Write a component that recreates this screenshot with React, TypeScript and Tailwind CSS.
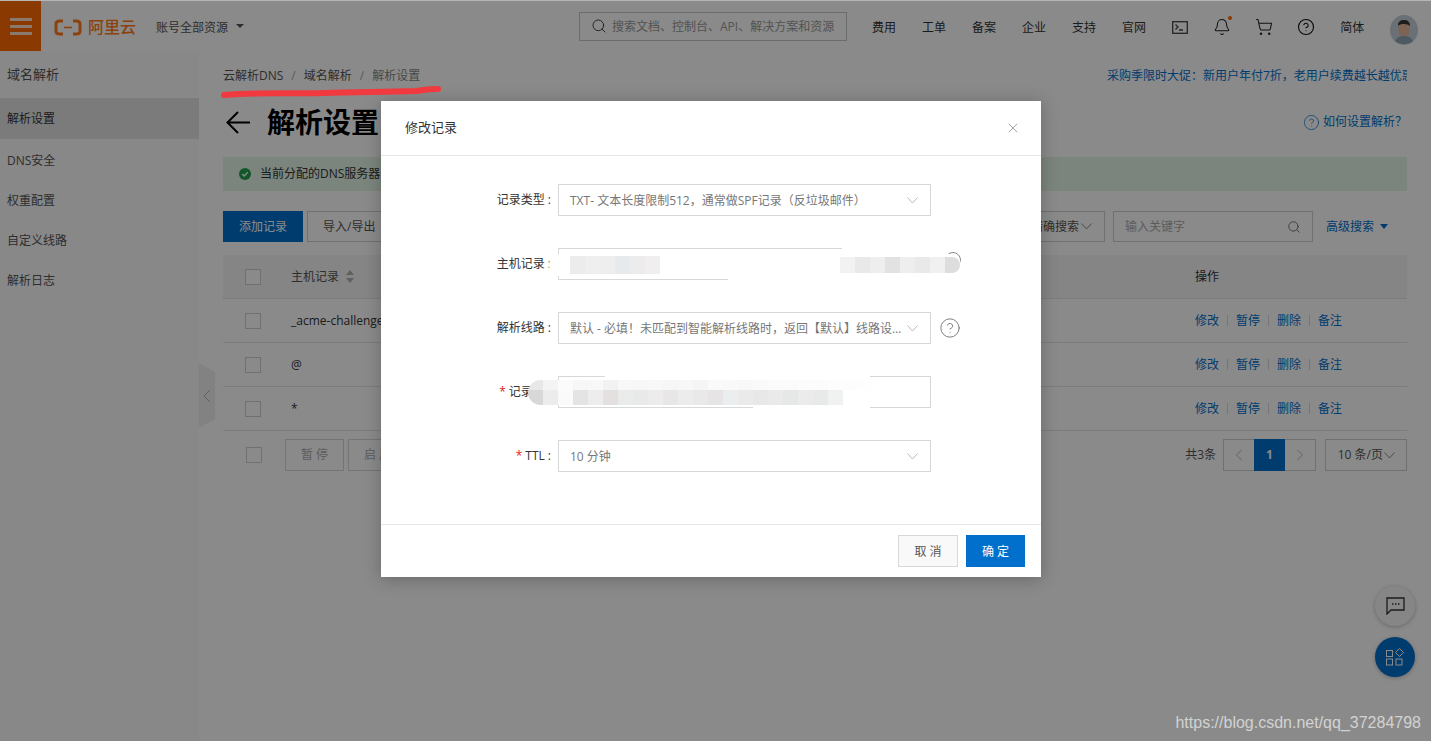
import { Bell, ChevronLeft, ChevronRight, CircleHelp, Search, ShoppingCart, X } from "lucide-react"

const navItems = ["费用", "工单", "备案", "企业", "支持", "官网"]
const sideItems = ["解析设置", "DNS安全", "权重配置", "自定义线路", "解析日志"]
const records = ["_acme-challenge", "@", "*"]
const actions = ["修改", "暂停", "删除", "备注"]

const mosaicHostLeft = ["#ececec", "#efefef", "#eeeeee", "#e6eaec", "#ececec", "#f0eeee"]
const mosaicHostRight = ["#f2f2f2", "#e9e9e9", "#eeeeee", "#e2e2e2", "#eeeeee", "#e9e9e9", "#f0f0f0", "#dddddd"]
const mosaicValueTop = ["#e8e8e8", "#f4f4f4", "#fbfbfb", "#f7f7f7", "#f8f8f8", "#f2f2f2", "#f8f8f8", "#f7f7f7", "#f8f8f8", "#f6f6f6", "#f7f7f7", "#f5f5f5", "#fafafa", "#f9f9f9", "#f8f8f8", "#fafafa", "#fbfbfb", "#fbfbfb", "#fcfcfc", "#fcfcfc", "#fdfdfd", "#fdfdfd", "#fefefe"]
const mosaicValueBottom = ["#d8d8d8", "#ececec", "#fafafa", "#e4e4e4", "#ededed", "#e4e0e0", "#eaecec", "#e9e9e9", "#ececec", "#e8e6e6", "#ececec", "#e9e9e9", "#e6e4e4", "#eaeeee", "#eaeaea", "#e8e8e8", "#eaeaea", "#e6e8e8", "#ebebeb", "#e8e9e9", "#eff2f0"]

function Mosaic({ colors, cell, height }: { colors: string[]; cell: number; height: number }) {
  return (
    <div className="flex">
      {colors.map((c, i) => (
        <div key={i} style={{ background: c, width: cell, height }} />
      ))}
    </div>
  )
}

function Caret({ color }: { color: string }) {
  return (
    <svg className="shrink-0" width="11" height="7" viewBox="0 0 11 7" fill="none" stroke={color} strokeWidth="1">
      <path d="M0.500 0.500l5 5.500 5-5.500" />
    </svg>
  )
}

function Logo() {
  return (
    <div className="flex items-center gap-[6px] text-[#ff7a1a]">
      <svg width="28" height="17" viewBox="0 0 28 17" fill="none" stroke="currentColor">
        <path d="M9 2H5.500C3.500 2 2 3.200 2 5v7c0 1.800 1.500 3 3.500 3H9" strokeWidth="3" />
        <path d="M19 2h3.500C24.500 2 26 3.200 26 5v7c0 1.800-1.500 3-3.500 3H19" strokeWidth="3" />
        <path d="M10 8.500h8" strokeWidth="1.600" />
      </svg>
      <span className="text-[16px] font-medium leading-none">阿里云</span>
    </div>
  )
}

function Header() {
  return (
    <header className="flex h-[50px] items-center bg-white shadow-[0_1px_3px_rgba(0,0,0,0.1)]">
      <div className="flex h-full w-[41px] flex-col items-center justify-center gap-[4px] bg-[#ff6a00]">
        <div className="h-[3px] w-[22px] bg-white/80" />
        <div className="h-[3px] w-[22px] bg-white/80" />
        <div className="h-[3px] w-[22px] bg-white/80" />
      </div>
      <div className="ml-[13px] mt-[2px]">
        <Logo />
      </div>
      <div className="ml-[20px] mt-[3px] text-[12px] text-[#555]">账号全部资源</div>
      <div className="ml-[8px] h-0 w-0 border-x-[4px] border-t-[4px] border-x-transparent border-t-[#555]" />
      <div className="ml-[335px] flex h-[29px] w-[268px] items-center border border-[#c8c8c8] px-[11px] text-[12px] text-[#999]">
        <Search size={16} strokeWidth={1.500} className="text-[#444]" />
        <span className="ml-[5px] mt-px whitespace-nowrap">搜索文档、控制台、API、解决方案和资源</span>
      </div>
      <nav className="ml-[25px] mt-[3px] flex gap-[26px] text-[12px] text-[#333]">
        {navItems.map((item) => (
          <span key={item} className="whitespace-nowrap">{item}</span>
        ))}
      </nav>
      <svg className="ml-[26px] mt-[2px]" width="16" height="13" viewBox="0 0 16 13" fill="none" stroke="#444" strokeWidth="1.300">
        <rect x="0.700" y="0.700" width="14.600" height="11.600" />
        <path d="M3.500 3.500l2.500 2.500-2.500 2.500M7 9h4" />
      </svg>
      <div className="relative ml-[25px] mt-px">
        <Bell size={18} strokeWidth={1.400} className="text-[#222]" />
        <div className="absolute -right-px -top-[2px] h-[4px] w-[4px] rounded-full bg-[#ff6a00]" />
      </div>
      <ShoppingCart size={18} strokeWidth={1.400} className="ml-[24px] mt-px text-[#222]" />
      <CircleHelp size={18} strokeWidth={1.500} className="ml-[24px] mt-px text-[#111]" />
      <span className="ml-[25px] mt-[3px] text-[12px] text-[#333]">简体</span>
      <svg className="ml-[26px] mt-[8px]" width="28" height="30" viewBox="0 0 28 30">
        <ellipse cx="14" cy="15" rx="14" ry="15" fill="#c3d0da" />
        <ellipse cx="14" cy="14" rx="6" ry="8" fill="#e5b79c" />
        <path d="M8 11c0-5 3-6 6-6s6 1 6 6c-2-2-9-3-12 0z" fill="#3a3431" />
        <path d="M5 26c2-4 5-5 9-5s7 1 9 5c-2 2-5 3-9 3s-7-1-9-3z" fill="#8fa6b5" />
      </svg>
    </header>
  )
}

function Sidebar() {
  return (
    <aside className="w-[199px] shrink-0 bg-[#fbfbfb] text-[12px] text-[#555]">
      <div className="flex h-[47px] items-center pl-[7px] text-[13px] leading-none">域名解析</div>
      {sideItems.map((item, i) => (
        <div
          key={item}
          className={i === 0 ? "mb-px flex h-[41px] items-center bg-[#e3e3e3] pl-[7px] pt-px text-[#333]" : "flex h-[40px] items-center pl-[7px] pt-px"}
        >
          {item}
        </div>
      ))}
    </aside>
  )
}

function Checkbox() {
  return <div className="h-[16px] w-[16px] border border-[#d0d0d0] bg-white" />
}

function Toolbar() {
  return (
    <div className="mt-[20px] flex h-[31px] items-center text-[12px]">
      <div className="flex h-full w-[80px] items-center justify-center bg-[#0070cc] text-white">添加记录</div>
      <div className="ml-[4px] flex h-full w-[90px] items-center border border-[#d0d0d0] pl-[15px] text-[#555]">导入/导出</div>
      <div className="ml-auto flex h-full w-[80px] items-center justify-end gap-[2px] border border-[#d0d0d0] pr-[12px] text-[#555]">
        <span>精确搜索</span>
        <Caret color="#888" />
      </div>
      <div className="ml-[8px] flex h-full w-[200px] items-center justify-between border border-[#d0d0d0] px-[11px] text-[#aaa]">
        <span>输入关键字</span>
        <Search size={14} strokeWidth={1.500} className="text-[#666]" />
      </div>
      <div className="ml-[13px] flex items-center text-[#0070cc]">
        <span>高级搜索</span>
        <div className="ml-[6px] h-0 w-0 border-x-[4px] border-t-[5px] border-x-transparent border-t-[#0070cc]" />
      </div>
      <div className="w-[19px]" />
    </div>
  )
}

function RecordTable() {
  return (
    <div className="mt-[13px] text-[12px]">
      <div className="flex h-[44px] items-center border-b border-[#e3e6ea] bg-[#f5f5f6] pl-[22px] text-[#555]">
        <Checkbox />
        <span className="ml-[30px]">主机记录</span>
        <svg className="ml-[7px]" width="8" height="13" viewBox="0 0 8 13" fill="#b0b0b0">
          <path d="M4 0l4 5H0zM4 13L0 8h8z" />
        </svg>
        <span className="ml-auto w-[212px] text-[#333]">操作</span>
      </div>
      {records.map((r) => (
        <div key={r} className="flex h-[44px] items-center border-b border-[#e3e6ea] pl-[22px] text-[#333]">
          <Checkbox />
          <span className="ml-[30px]">{r}</span>
          <div className="ml-auto flex w-[212px] items-center text-[#0070cc]">
            {actions.map((a, i) => (
              <div key={a} className="flex items-center">
                {i > 0 && <div className="mx-[8px] h-[11px] w-px bg-[#d8d8d8]" />}
                <span>{a}</span>
              </div>
            ))}
          </div>
        </div>
      ))}
    </div>
  )
}

function Footer() {
  return (
    <div className="mt-[8px] flex h-[32px] items-center pl-[23px] text-[12px]">
      <Checkbox />
      <div className="ml-[23px] flex h-full w-[59px] items-center justify-center border border-[#d8d8d8] text-[#aaa]">暂 停</div>
      <div className="ml-[4px] flex h-full w-[59px] items-center justify-center border border-[#d8d8d8] text-[#aaa]">启 用</div>
      <span className="ml-auto text-[#555]">共3条</span>
      <div className="ml-[7px] flex h-full w-[93px] items-center border border-[#d0d0d0]">
        <div className="flex w-[30px] justify-center text-[#aaa]"><ChevronLeft size={20} strokeWidth={1} /></div>
        <div className="flex h-[32px] w-[32px] items-center justify-center bg-[#0070cc] font-bold text-white">1</div>
        <div className="flex w-[30px] justify-center text-[#aaa]"><ChevronRight size={20} strokeWidth={1} /></div>
      </div>
      <div className="ml-[9px] flex h-full w-[82px] items-center justify-end gap-px border border-[#d0d0d0] pr-[11px] text-[#555]">
        <span className="whitespace-nowrap">10 条/页</span>
        <Caret color="#888" />
      </div>
    </div>
  )
}

function Main() {
  return (
    <main className="relative min-w-0 flex-1 bg-white pl-[24px] pr-[24px]">
      <div className="mt-[16px] flex h-[18px] items-center text-[12px] text-[#555]">
        <span>云解析DNS</span>
        <span className="mx-[8px] text-[#aaa]">/</span>
        <span>域名解析</span>
        <span className="mx-[8px] text-[#aaa]">/</span>
        <span className="text-[#888]">解析设置</span>
        <div className="ml-auto w-[300px] overflow-hidden whitespace-nowrap text-[#0070cc]">采购季限时大促：新用户年付7折，老用户续费越长越优惠</div>
      </div>
      <div className="mt-[19px] flex h-[36px] items-center">
        <svg className="ml-[3px]" width="24" height="23" viewBox="0 0 24 23" fill="none" stroke="black" strokeWidth="2">
          <path d="M12 1L1.500 11.500 12 22M1.500 11.500H24" />
        </svg>
        <span className="ml-[17px] text-[28px] font-bold leading-none text-black">解析设置</span>
        <div className="ml-auto flex items-center text-[12px] text-[#0070cc]">
          <CircleHelp size={17} strokeWidth={1} />
          <span className="ml-[3px]">如何设置解析？</span>
        </div>
      </div>
      <div className="mt-[17px] flex h-[34px] items-center bg-[#e3f5e8] pl-[16px] text-[12px] text-[#333]">
        <svg width="12" height="12" viewBox="0 0 12 12">
          <circle cx="6" cy="6" r="6" fill="#22a04c" />
          <path d="M3.200 6l2 2 3.500-3.800" fill="none" stroke="white" strokeWidth="1.300" />
        </svg>
        <span className="ml-[9px]">当前分配的DNS服务器</span>
      </div>
      <Toolbar />
      <RecordTable />
      <Footer />
      <svg className="absolute left-0 top-[312px]" width="17" height="66" viewBox="0 0 17 66">
        <path d="M0 0l16 9v47L0 65z" fill="#f0f0f0" />
        <path d="M11 27l-6 6 6 6" fill="none" stroke="#b4b4b4" strokeWidth="1" />
      </svg>
    </main>
  )
}

function FormRow({ label, required, children }: { label: string; required?: boolean; children: React.ReactNode }) {
  return (
    <div className="relative flex h-[32px] items-center">
      <div className="flex w-[170px] items-center justify-end text-[12px] text-[#333]">
        {required && <span className="mr-[3px] text-[#e02020]">*</span>}
        <span>{label}</span>
        <span className="ml-[3px]">:</span>
      </div>
      <div className="ml-[7px]">{children}</div>
    </div>
  )
}

function SelectBox({ text }: { text: string }) {
  return (
    <div className="flex h-[32px] w-[373px] items-center justify-between border border-[#d7d8d9] pl-[11px] pr-[12px] text-[12px] text-[#777]">
      <span className="truncate pt-px">{text}</span>
      <div className="ml-[4px]">
        <Caret color="#bbb" />
      </div>
    </div>
  )
}

function EditDialog() {
  return (
    <div className="absolute left-[381px] top-[101px] flex h-[476px] w-[660px] flex-col bg-white shadow-[0_2px_16px_rgba(0,0,0,0.25)]">
      <div className="flex h-[55px] shrink-0 items-center justify-between border-b border-[#e3e6ea] pl-[24px] pr-[20px]">
        <span className="text-[13px] text-[#333]">修改记录</span>
        <X size={16} strokeWidth={1} className="text-[#777]" />
      </div>
      <div className="flex flex-1 flex-col gap-[32px] pt-[28px]">
        <FormRow label="记录类型">
          <SelectBox text="TXT- 文本长度限制512，通常做SPF记录（反垃圾邮件）" />
        </FormRow>
        <FormRow label="主机记录">
          <div className="h-[32px] w-[373px] border border-[#d7d8d9]" />
          <div className="absolute left-[564px] top-[4px] h-[16px] w-[16px] rounded-full border border-[#888]" />
          <div className="absolute left-[347px] top-[31px] h-[3px] w-[240px] bg-white" />
          <div className="absolute left-[461px] top-[-2px] h-[5px] w-[130px] bg-white" />
          <div className="absolute left-[545px] top-0 h-[34px] w-[10px] bg-white" />
          <div className="absolute left-[168px] top-[6px] flex h-[22px] w-[412px] items-center rounded-full bg-white">
            <div className="ml-[21px]">
              <Mosaic colors={mosaicHostLeft} cell={15} height={18} />
            </div>
            <div className="ml-[180px] overflow-hidden rounded-r-full">
              <Mosaic colors={mosaicHostRight} cell={15} height={16} />
            </div>
          </div>
        </FormRow>
        <FormRow label="解析线路">
          <div className="flex items-center">
            <SelectBox text="默认 - 必填！未匹配到智能解析线路时，返回【默认】线路设置结果" />
            <div className="ml-[8px]">
              <CircleHelp size={22} strokeWidth={0.900} className="text-[#666]" />
            </div>
          </div>
        </FormRow>
        <FormRow label="记录值" required>
          <div className="h-[32px] w-[373px] border border-[#d7d8d9]" />
          <div className="absolute left-[224px] top-[-1px] h-[5px] w-[265px] bg-white" />
          <div className="absolute left-[372px] top-[29px] h-[6px] w-[117px] bg-white" />
          <div className="absolute left-[147px] top-[4px] overflow-hidden rounded-l-full">
            <Mosaic colors={mosaicValueTop} cell={15} height={10} />
            <Mosaic colors={mosaicValueBottom} cell={15} height={15} />
          </div>
        </FormRow>
        <FormRow label="TTL" required>
          <SelectBox text="10 分钟" />
        </FormRow>
      </div>
      <div className="flex h-[53px] shrink-0 items-start justify-end gap-[8px] border-t border-[#e3e6ea] pr-[16px] pt-[10px] text-[12px]">
        <div className="flex h-[32px] w-[60px] items-center justify-center border border-[#d7d8d9] bg-[#f9f9f9] pt-px text-[#555]">取 消</div>
        <div className="flex h-[32px] w-[59px] items-center justify-center bg-[#0070cc] pt-px text-white">确 定</div>
      </div>
    </div>
  )
}

export default function App() {
  return (
    <div className="relative h-[741px] w-[1431px] overflow-hidden bg-[#b8b8b8] pt-px font-['Open_Sans','Noto_Sans_CJK_SC',sans-serif]">
      <Header />
      <div className="flex h-[690px]">
        <Sidebar />
        <Main />
      </div>

      <div className="absolute left-[1375px] top-[586px] flex h-[40px] w-[40px] items-center justify-center rounded-full bg-[#f7f7f7] shadow-[0_1px_4px_rgba(0,0,0,0.25)]">
        <svg width="19" height="18" viewBox="0 0 19 18" fill="none" stroke="#333" strokeWidth="1.300">
          <path d="M1 1h17v12H5l-4 4z" />
          <path d="M6 7h1.500M9 7h1.500M12 7h1.500" strokeWidth="1.600" />
        </svg>
      </div>
      <div className="absolute left-[1375px] top-[637px] flex h-[40px] w-[40px] items-center justify-center rounded-full bg-[#0070cc] shadow-[0_1px_4px_rgba(0,0,0,0.25)]">
        <svg width="19" height="18" viewBox="0 0 19 18" fill="none" stroke="white" strokeWidth="1">
          <rect x="0.500" y="2.500" width="6" height="6" />
          <path d="M13.500 0.500l4 4-4 4-4-4z" />
          <rect x="0.500" y="11" width="6" height="6" />
          <rect x="10" y="11" width="6" height="6" />
        </svg>
      </div>

      <div className="absolute inset-x-0 bottom-0 top-px bg-black/[0.46]" />
      <EditDialog />

      <svg className="absolute left-[220px] top-[84px]" width="224" height="16" viewBox="0 0 224 16" fill="none">
        <path d="M4 11c40-3 60-1 100-2 35-1 60-1 92-2 8-1 12-2 22-2" stroke="#f03a40" strokeWidth="6" strokeLinecap="round" />
      </svg>
      <div className="absolute bottom-[8px] right-[10px] font-['Liberation_Sans',sans-serif] text-[16px] leading-[20px] text-[#d2d2d2]">https://blog.csdn.net/qq_37284798</div>
    </div>
  )
}
